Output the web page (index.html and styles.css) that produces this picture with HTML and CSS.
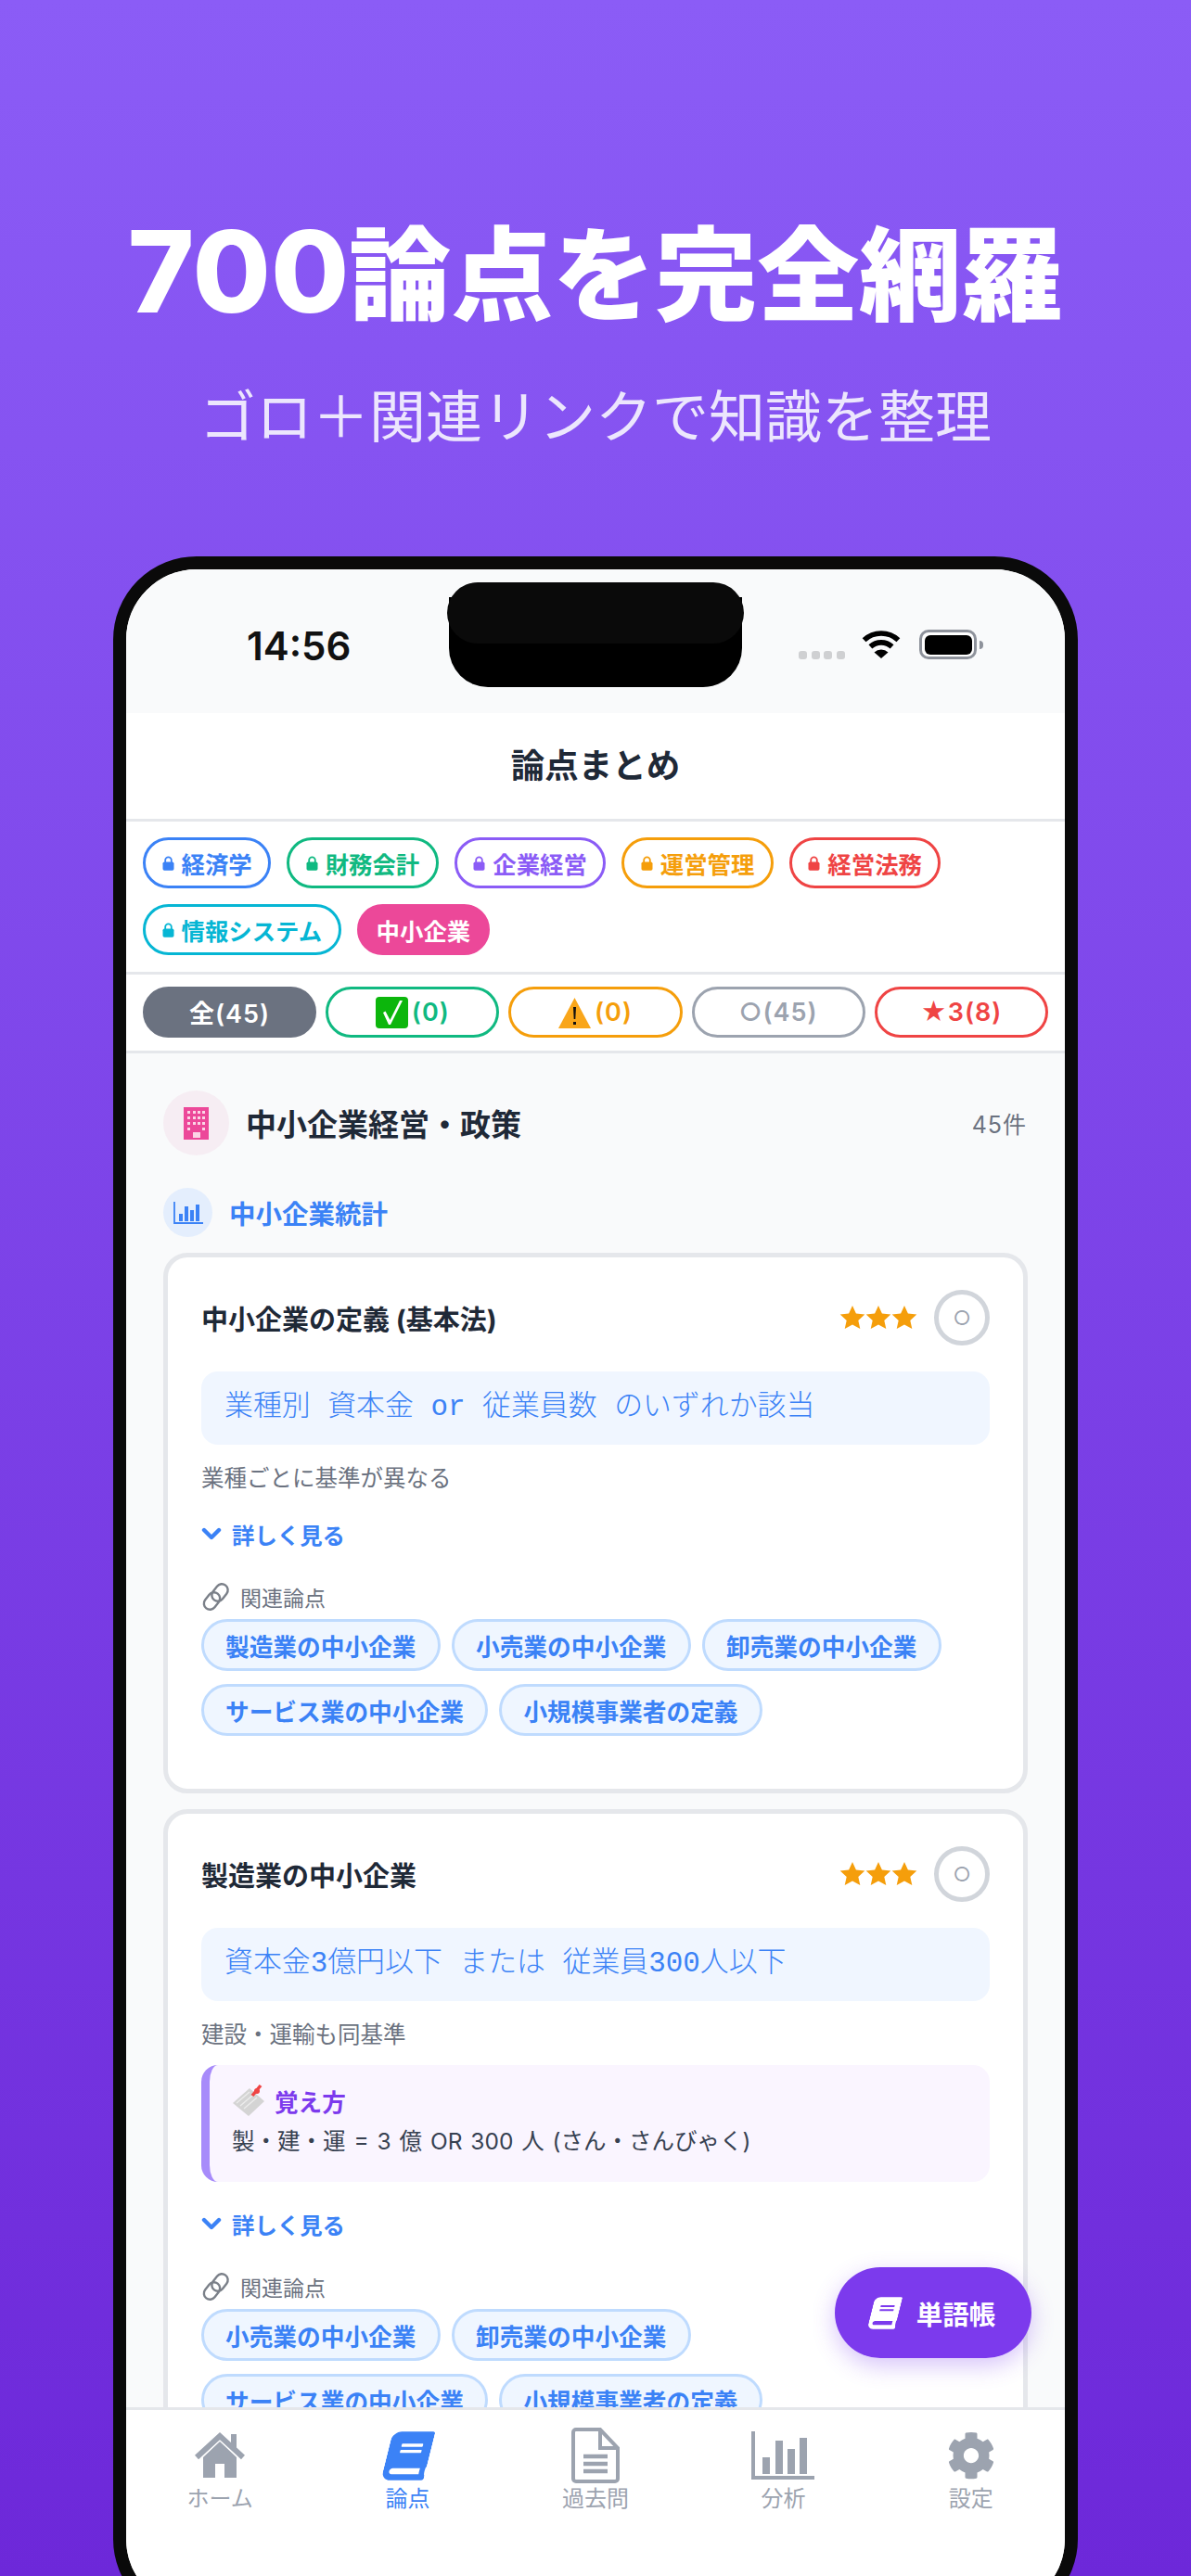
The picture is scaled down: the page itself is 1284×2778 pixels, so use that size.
FILE: index.html
```html
<!DOCTYPE html>
<html lang="ja">
<head>
<meta charset="utf-8">
<title>700論点を完全網羅</title>
<link rel="stylesheet" href="styles.css">
</head>
<body>
<svg class="defs" width="0" height="0" aria-hidden="true">
  <defs>
    <symbol id="lock" viewBox="0 0 13 16"><path d="M3.2 7V4.6a3.3 3.3 0 0 1 6.6 0V7" fill="none" stroke="currentColor" stroke-width="1.8"/><rect x="0.5" y="6.4" width="12" height="9.4" rx="1.8" fill="currentColor"/></symbol>
    <symbol id="star" viewBox="0 0 28 28"><path d="M14 1l3.9 8.6 9.4 1-7 6.3 2 9.2-8.3-4.7-8.3 4.7 2-9.2-7-6.3 9.4-1z" fill="currentColor"/></symbol>
    <symbol id="chev" viewBox="0 0 22 16"><path d="M3 4l8 8 8-8" fill="none" stroke="currentColor" stroke-width="4.4" stroke-linecap="round" stroke-linejoin="round"/></symbol>
    <symbol id="chain" viewBox="0 0 32 32"><g fill="none" stroke="#7b8089" stroke-width="2.4"><rect x="13.5" y="1.5" width="13" height="20" rx="6.5" transform="rotate(38 20 11.5)"/><rect x="5" y="10.5" width="13" height="20" rx="6.5" transform="rotate(38 11.5 20.5)"/></g></symbol>
    <symbol id="book" viewBox="0 0 448 512"><path d="M448 360V24c0-13.3-10.7-24-24-24H96C43 0 0 43 0 96v320c0 53 43 96 96 96h328c13.3 0 24-10.7 24-24v-16c0-7.5-3.5-14.3-8.9-18.7-4.2-15.4-4.2-59.3 0-74.7 5.4-4.3 8.9-11.1 8.9-18.6zM128 134c0-3.3 2.7-6 6-6h212c3.3 0 6 2.7 6 6v20c0 3.3-2.7 6-6 6H134c-3.3 0-6-2.7-6-6v-20zm0 64c0-3.3 2.7-6 6-6h212c3.3 0 6 2.7 6 6v20c0 3.3-2.7 6-6 6H134c-3.3 0-6-2.7-6-6v-20zm253.4 250H96c-17.7 0-32-14.3-32-32 0-17.6 14.4-32 32-32h285.4c-1.9 17.1-1.9 46.9 0 64z" fill="currentColor"/></symbol>
  </defs>
</svg>

<header class="hero">
  <h1 class="hero-title"><span class="hero-num">700</span>論点を完全網羅</h1>
  <p class="hero-sub">ゴロ＋関連リンクで知識を整理</p>
</header>

<div class="phone">
  <div class="screen">
    <div class="status">
      <span class="time">14:56</span>
      <div class="status-right">
        <span class="dots"><i></i><i></i><i></i><i></i></span>
        <svg class="wifi" viewBox="0 0 42 31"><path d="M2.6 11.2a27 27 0 0 1 36.8 0" fill="none" stroke="#000" stroke-width="5.6"/><path d="M9.4 18.4a17 17 0 0 1 23.2 0" fill="none" stroke="#000" stroke-width="5.6"/><path d="M13.5 24.5a11 11 0 0 1 15 0L21 31z" fill="#000"/></svg>
        <span class="battery"><i></i></span>
        <span class="nub"></span>
      </div>
      <div class="island-body"></div>
      <div class="island-top"></div>
    </div>

    <div class="nav-title">論点まとめ</div>

    <div class="subjects">
      <span class="chip c-blue"><svg class="lock"><use href="#lock"/></svg>経済学</span>
      <span class="chip c-green"><svg class="lock"><use href="#lock"/></svg>財務会計</span>
      <span class="chip c-purple"><svg class="lock"><use href="#lock"/></svg>企業経営</span>
      <span class="chip c-orange"><svg class="lock"><use href="#lock"/></svg>運営管理</span>
      <span class="chip c-red"><svg class="lock"><use href="#lock"/></svg>経営法務</span>
      <span class="chip c-cyan"><svg class="lock"><use href="#lock"/></svg>情報システム</span>
      <span class="chip chip-on">中小企業</span>
    </div>

    <div class="filters">
      <span class="filter f-all">全(45)</span>
      <span class="filter c-green"><svg class="emoji" viewBox="0 0 35 34"><rect width="35" height="34" rx="4" fill="#0cb60c"/><path d="M8 17l2.500-1.500 5 9.500L26 4h3L16 30h-2z" fill="#fff"/></svg>(0)</span>
      <span class="filter c-orange"><svg class="emoji" viewBox="0 0 35 34"><path d="M17.500 1L35 34H0z" fill="#f9a61a"/><path d="M16 11h3l-.7 13h-1.600zM16 27h3v3h-3z" fill="#111"/></svg>(0)</span>
      <span class="filter c-gray">○(45)</span>
      <span class="filter c-red">★3(8)</span>
    </div>

    <main class="main">
      <div class="content">
        <div class="sec-head">
          <span class="sec-icon">
            <svg width="27" height="35" viewBox="0 0 27 35"><rect width="27" height="35" fill="#ec4899"/><g fill="#fbd5e6"><rect x="4" y="4" width="3" height="3"/><rect x="10" y="4" width="3" height="3"/><rect x="15" y="4" width="3" height="3"/><rect x="20" y="4" width="3" height="3"/><rect x="4" y="10" width="3" height="3"/><rect x="10" y="10" width="3" height="3"/><rect x="15" y="10" width="3" height="3"/><rect x="20" y="10" width="3" height="3"/><rect x="4" y="16" width="3" height="3"/><rect x="10" y="16" width="3" height="3"/><rect x="15" y="16" width="3" height="3"/><rect x="20" y="16" width="3" height="3"/><rect x="4" y="22" width="3" height="3"/><rect x="20" y="22" width="3" height="3"/><rect x="10" y="27" width="8" height="6"/></g></svg>
          </span>
          <span class="sec-title">中小企業経営・政策</span>
          <span class="sec-count">45件</span>
        </div>
        <div class="sub-head">
          <span class="sub-icon">
            <svg width="32" height="24" viewBox="0 0 32 24"><path d="M1 0v23h31" fill="none" stroke="#3b82f6" stroke-width="1.800"/><g fill="#3b82f6"><rect x="6" y="13" width="4" height="8"/><rect x="12" y="5" width="4" height="16"/><rect x="18" y="9" width="4" height="12"/><rect x="24" y="3" width="4" height="18"/></g></svg>
          </span>
          <span class="sub-title">中小企業統計</span>
        </div>

        <article class="card">
          <div class="card-top">
            <h2 class="card-title">中小企業の定義 (基本法)</h2>
            <span class="stars"><svg><use href="#star"/></svg><svg><use href="#star"/></svg><svg><use href="#star"/></svg></span>
            <span class="check">○</span>
          </div>
          <div class="def">業種別 資本金 or 従業員数 のいずれか該当</div>
          <p class="note">業種ごとに基準が異なる</p>
          <div class="more"><svg class="chev"><use href="#chev"/></svg>詳しく見る</div>
          <div class="rel-label"><svg class="chain"><use href="#chain"/></svg>関連論点</div>
          <div class="rel-list">
            <span class="rel">製造業の中小企業</span>
            <span class="rel">小売業の中小企業</span>
            <span class="rel">卸売業の中小企業</span>
            <span class="rel">サービス業の中小企業</span>
            <span class="rel">小規模事業者の定義</span>
          </div>
        </article>

        <article class="card">
          <div class="card-top">
            <h2 class="card-title">製造業の中小企業</h2>
            <span class="stars"><svg><use href="#star"/></svg><svg><use href="#star"/></svg><svg><use href="#star"/></svg></span>
            <span class="check">○</span>
          </div>
          <div class="def">資本金3億円以下 または 従業員300人以下</div>
          <p class="note">建設・運輸も同基準</p>
          <div class="memo">
            <div class="memo-head">
              <svg class="tag" viewBox="0 0 36 36"><path d="M1 21L19 5l16 14-17 16z" fill="#d4d4d4"/><path d="M5 21l14-12M9 24l14-12M13 27l14-12" stroke="#ececec" stroke-width="1.500"/><path d="M22 13l9-11" stroke="#ef4444" stroke-width="3.500"/><circle cx="27" cy="8" r="3" fill="#ef4444"/></svg>
              <span>覚え方</span>
            </div>
            <div class="memo-text">製・建・運 = 3 億 OR 300 人 (さん・さんびゃく)</div>
          </div>
          <div class="more more-after-memo"><svg class="chev"><use href="#chev"/></svg>詳しく見る</div>
          <div class="rel-label"><svg class="chain"><use href="#chain"/></svg>関連論点</div>
          <div class="rel-list">
            <span class="rel">小売業の中小企業</span>
            <span class="rel">卸売業の中小企業</span>
            <span class="rel">サービス業の中小企業</span>
            <span class="rel">小規模事業者の定義</span>
          </div>
        </article>
      </div>

      <div class="fab">
        <svg class="fab-icon"><use href="#book"/></svg>
        <span>単語帳</span>
      </div>
    </main>

    <nav class="tabs">
      <div class="tab">
        <svg class="tab-icon" width="54" height="60" viewBox="0 0 54 60"><path d="M2 32L27 9l25 23" fill="none" stroke="#9ca3af" stroke-width="6"/><path d="M39 7h6v16l-6-6z" fill="#9ca3af"/><path d="M27 15L9 32v22h13V39h10v15h13V32z" fill="#9ca3af"/></svg>
        <span>ホーム</span>
      </div>
      <div class="tab tab-on">
        <svg class="tab-icon book-tab"><use href="#book"/></svg>
        <span>論点</span>
      </div>
      <div class="tab">
        <svg class="tab-icon" width="52" height="60" viewBox="0 0 52 60"><path d="M5 2h26l19 20v33a3 3 0 0 1-3 3H5a3 3 0 0 1-3-3V5a3 3 0 0 1 3-3z" fill="none" stroke="#9ca3af" stroke-width="4"/><path d="M31 2v20h19" fill="none" stroke="#9ca3af" stroke-width="4"/><path d="M13 31h26M13 39h26M13 47h26" stroke="#9ca3af" stroke-width="4.400"/></svg>
        <span>過去問</span>
      </div>
      <div class="tab">
        <svg class="tab-icon" width="68" height="60" viewBox="0 0 68 60"><path d="M2 4v50h66" fill="none" stroke="#9ca3af" stroke-width="4"/><g fill="#9ca3af"><rect x="12" y="32" width="8" height="18"/><rect x="26" y="14" width="8" height="36"/><rect x="39" y="23" width="8" height="27"/><rect x="52" y="11" width="8" height="39"/></g></svg>
        <span>分析</span>
      </div>
      <div class="tab">
        <svg class="tab-icon" width="52" height="60" viewBox="0 0 512 590"><path d="M487.4 355.700l-42.600-24.600c4.300-23.200 4.300-47 0-70.200l42.600-24.600c4.900-2.800 7.100-8.600 5.500-14-11.100-35.600-30-67.800-54.700-94.600-3.800-4.100-10-5.100-14.800-2.300L380.800 150c-17.900-15.400-38.500-27.300-60.800-35.100V65.800c0-5.600-3.900-10.500-9.400-11.700-36.700-8.200-74.300-7.800-109.200 0-5.500 1.200-9.400 6.100-9.400 11.700V115c-22.200 7.900-42.800 19.800-60.800 35.100L88.700 125.500c-4.900-2.800-11-1.900-14.800 2.300-24.700 26.700-43.600 58.900-54.700 94.600-1.700 5.400.6 11.200 5.500 14L67.300 261c-4.300 23.200-4.300 47 0 70.200l-42.600 24.600c-4.900 2.800-7.100 8.600-5.500 14 11.100 35.600 30 67.800 54.700 94.600 3.800 4.100 10 5.100 14.800 2.300l42.600-24.600c17.900 15.400 38.500 27.300 60.800 35.100v49.200c0 5.600 3.900 10.500 9.400 11.700 36.700 8.200 74.300 7.800 109.200 0 5.500-1.200 9.400-6.100 9.400-11.700v-49.200c22.200-7.900 42.800-19.800 60.800-35.100l42.600 24.600c4.900 2.800 11 1.900 14.800-2.300 24.700-26.700 43.600-58.900 54.700-94.600 1.500-5.500-.7-11.300-5.600-14.100zM256 376c-44.100 0-80-35.900-80-80s35.900-80 80-80 80 35.900 80 80-35.900 80-80 80z" fill="#9ca3af"/></svg>
        <span>設定</span>
      </div>
    </nav>
  </div>
</div>
</body>
</html>
```

FILE: styles.css
```css
* { box-sizing: border-box; }
html, body { margin: 0; padding: 0; }
body {
  width: 1284px;
  height: 2778px;
  overflow: hidden;
  background: linear-gradient(180deg, #8b5cf6 0%, #6d28d9 100%);
  font-family: Inter, "Noto Sans CJK JP", sans-serif;
  color: #1f2937;
}
.defs { position: absolute; }

.hero { height: 600px; padding-top: 214px; text-align: center; }
.hero-title {
  margin: 0;
  height: 150px;
  font: 900 110px/150px "Noto Sans CJK JP", sans-serif;
  color: #fff;
  white-space: nowrap;
}
.hero-num {
  font-family: Inter, sans-serif;
  font-weight: 800;
  font-size: 122px;
  line-height: 1;
}
.hero-sub {
  margin: 0;
  padding-top: 40px;
  font: 400 61px/84px "Noto Sans CJK JP", sans-serif;
  color: #ece6fd;
  white-space: nowrap;
}

.phone {
  width: 1040px;
  height: 2228px;
  margin-left: 122px;
  border: 14px solid #0a0a0a;
  border-radius: 90px;
  background: #fff;
  overflow: hidden;
}
.screen {
  height: 100%;
  display: flex;
  flex-direction: column;
}

.status {
  position: relative;
  height: 155px;
  flex: none;
  background: #f9fafb;
  display: flex;
  justify-content: space-between;
  align-items: flex-start;
  padding: 63px 88px 0 130px;
}
.time { font: 600 42px/40px Inter, sans-serif; color: #111; }
.status-right { display: flex; align-items: flex-start; padding-top: 2px; }
.dots { display: flex; gap: 4.600px; margin-top: 23px; margin-right: 18px; }
.dots i { width: 9px; height: 9px; border-radius: 3px; background: #cfd0d2; }
.wifi { width: 42px; height: 31px; margin-right: 20px; }
.battery {
  width: 62px;
  height: 32px;
  border: 3px solid #8e929b;
  border-radius: 10px;
  padding: 2.500px;
  background: #fff;
}
.battery i { display: block; height: 100%; background: #000; border-radius: 6px; }
.nub { width: 4px; height: 9px; margin: 11.500px 0 0 3px; background: #8e929b; border-radius: 0 4px 4px 0; }
.island-body {
  position: absolute; left: 348px; top: 30px;
  width: 316px; height: 97px;
  background: #000;
  border-radius: 0 0 42px 42px;
}
.island-top {
  position: absolute; left: 346px; top: 14px;
  width: 320px; height: 66px;
  background: #0a0a0a;
  border-radius: 33px;
}

.nav-title {
  flex: none;
  height: 117px;
  background: #fff;
  border-bottom: 3px solid #e5e7eb;
  text-align: center;
  font-size: 36.500px;
  font-weight: 700;
  line-height: 114px;
}

.subjects {
  flex: none;
  display: flex;
  flex-wrap: wrap;
  gap: 17px 17px;
  padding: 17px 18px 18px;
  background: #fff;
  border-bottom: 3px solid #e5e7eb;
}
.chip {
  display: inline-flex;
  align-items: center;
  height: 55px;
  padding: 0 17.500px;
  border: 3px solid currentColor;
  border-radius: 28px;
  font-size: 25.400px;
  font-weight: 700;
  background: #fff;
  white-space: nowrap;
}
.lock { width: 13px; height: 16px; margin-right: 8px; flex: none; }
.chip-on { background: #ec4899; border-color: #ec4899; color: #fff; padding: 0 18px; }
.c-blue { color: #3b82f6; }
.c-green { color: #10b981; }
.c-purple { color: #8b5cf6; }
.c-orange { color: #f59e0b; }
.c-red { color: #ef4444; }
.c-cyan { color: #06b6d4; }
.c-gray { color: #9ca3af; }

.filters {
  flex: none;
  display: flex;
  gap: 10px;
  padding: 13px 18px 14px;
  background: #fff;
  border-bottom: 3px solid #e5e7eb;
}
.filter {
  flex: 1;
  height: 55px;
  display: flex;
  align-items: center;
  justify-content: center;
  border: 3px solid currentColor;
  border-radius: 28px;
  font-size: 27px;
  font-weight: 600;
  letter-spacing: 1px;
  white-space: nowrap;
}
.f-all { background: #6b7280; border-color: #6b7280; color: #fff; }
.emoji { width: 35px; height: 34px; margin-right: 4px; }

.main { position: relative; flex: 1; min-height: 0; overflow: hidden; background: #f9fafb; }
.content { padding: 40px 40px 0; }

.sec-head { display: flex; align-items: center; height: 70px; }
.sec-icon {
  width: 71px; height: 70px; flex: none;
  border-radius: 50%;
  background: #f6edf3;
  display: flex; align-items: center; justify-content: center;
  margin-right: 18px;
}
.sec-title { flex: 1; font-size: 33px; font-weight: 700; }
.sec-count { font-size: 25px; color: #6b7280; padding-right: 1px; letter-spacing: 1px; }
.sub-head { display: flex; align-items: center; height: 53px; margin-top: 35px; }
.sub-icon {
  width: 53px; height: 53px; flex: none;
  border-radius: 50%;
  background: #e4eefd;
  display: flex; align-items: center; justify-content: center;
  margin-right: 18px;
}
.sub-title { font-size: 28.500px; font-weight: 700; color: #3b82f6; }

.card {
  margin-top: 17px;
  border: 5px solid #e5e7eb;
  border-radius: 26px;
  background: #fff;
  padding: 35px 36px 57px;
}
.card-top { display: flex; align-items: center; height: 60px; }
.card-title { flex: 1; margin: 0; font-size: 29px; font-weight: 700; }
.stars { display: flex; color: #f59e0b; margin-right: 18px; }
.stars svg { width: 28px; height: 28px; }
.check {
  width: 60px; height: 60px;
  border: 5px solid #d1d5db;
  border-radius: 50%;
  display: flex; align-items: center; justify-content: center;
  font-size: 21px;
  color: #9ca3af;
}
.def {
  margin-top: 28px;
  height: 79px;
  padding: 0 25px;
  border-radius: 18px;
  background: #f0f6ff;
  font: 300 30.900px/77px "Liberation Mono", "Noto Sans CJK JP", monospace;
  color: #3b82f6;
  white-space: nowrap;
}
.note { margin: 18px 0 0; font-size: 24.500px; line-height: 36px; color: #6b7280; }
.more {
  display: flex; align-items: center;
  margin-top: 24px;
  height: 36px;
  font-size: 24.400px;
  font-weight: 700;
  color: #3b82f6;
}
.more-after-memo { margin-top: 27px; }
.chev { width: 22px; height: 16px; margin-right: 11px; }
.rel-label {
  display: flex; align-items: center;
  margin-top: 35px;
  height: 30px;
  font-size: 23px;
  color: #6b7280;
}
.chain { width: 32px; height: 32px; margin-right: 10px; }
.rel-list { display: flex; flex-wrap: wrap; gap: 14px 12.500px; margin-top: 9px; padding-right: 10px; }
.rel {
  height: 56px;
  padding: 0 23px;
  display: flex; align-items: center;
  border: 3px solid #bfdbfe;
  border-radius: 28px;
  background: #eff6ff;
  font-size: 25.700px;
  font-weight: 700;
  color: #3b82f6;
  white-space: nowrap;
}
.memo {
  margin-top: 15px;
  height: 126px;
  padding: 20px 24px 0 24px;
  border-left: 9px solid #a78bfa;
  border-radius: 18px;
  background: #faf5ff;
}
.memo-head { display: flex; align-items: center; height: 36px; font-size: 25.600px; font-weight: 700; color: #7c3aed; }
.tag { width: 36px; height: 36px; margin-right: 10px; }
.memo-text { margin-top: 8px; font-size: 24.500px; line-height: 36px; color: #374151; white-space: nowrap; word-spacing: 2px; }

.fab {
  position: absolute;
  right: 36px;
  bottom: 53px;
  width: 212px;
  height: 98px;
  border-radius: 49px;
  background: #7c3aed;
  box-shadow: 0 8px 24px rgba(124, 58, 237, .3);
  display: flex; align-items: center; justify-content: center;
  color: #fff;
  font-size: 28.500px;
  font-weight: 700;
}
.fab-icon { width: 30px; height: 35px; margin-right: 19px; transform: skewX(-14deg); }

.tabs {
  flex: none;
  height: 218px;
  display: flex;
  background: #fff;
  border-top: 3px solid #e5e7eb;
  padding-top: 19px;
}
.tab {
  flex: 1;
  display: flex; flex-direction: column; align-items: center;
  font-size: 24px;
  line-height: 30px;
  color: #9ca3af;
}
.tab span { margin-top: 2px; }
.tab-on { color: #3b82f6; }
.tab-icon { height: 60px; flex: none; }
.book-tab { width: 46px; height: 53px; margin: 4px 0 3px; transform: skewX(-14deg); }
```
